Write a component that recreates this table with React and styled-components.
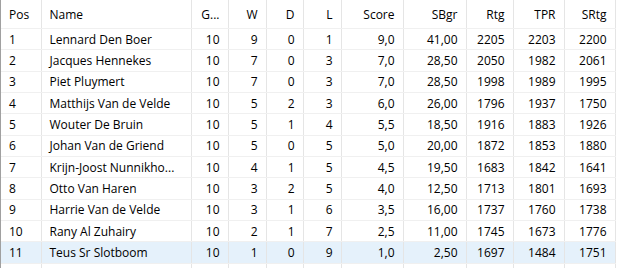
import styled, { createGlobalStyle } from "styled-components";

const GlobalStyle = createGlobalStyle`
  html, body {
    margin: 0;
    padding: 0;
    background: #ffffff;
  }
  body {
    font-family: "Open Sans", "Liberation Sans", sans-serif;
    font-size: 12px;
    color: #000;
  }
`;

const columns = [
  { key: "pos", label: "Pos", width: 40, align: "left" },
  { key: "name", label: "Name", width: 150, align: "left" },
  { key: "g", label: "G...", width: 37 },
  { key: "w", label: "W", width: 38 },
  { key: "d", label: "D", width: 37 },
  { key: "l", label: "L", width: 38 },
  { key: "score", label: "Score", width: 62 },
  { key: "sbgr", label: "SBgr", width: 63 },
  { key: "rtg", label: "Rtg", width: 47 },
  { key: "tpr", label: "TPR", width: 51 },
  { key: "srtg", label: "SRtg", width: 51 },
];

const rows = [
  [1, "Lennard Den Boer", 10, 9, 0, 1, "9,0", "41,00", 2205, 2203, 2200],
  [2, "Jacques Hennekes", 10, 7, 0, 3, "7,0", "28,50", 2050, 1982, 2061],
  [3, "Piet Pluymert", 10, 7, 0, 3, "7,0", "28,50", 1998, 1989, 1995],
  [4, "Matthijs Van de Velde", 10, 5, 2, 3, "6,0", "26,00", 1796, 1937, 1750],
  [5, "Wouter De Bruin", 10, 5, 1, 4, "5,5", "18,50", 1916, 1883, 1926],
  [6, "Johan Van de Griend", 10, 5, 0, 5, "5,0", "20,00", 1872, 1853, 1880],
  [7, "Krijn-Joost Nunnikho...", 10, 4, 1, 5, "4,5", "19,50", 1683, 1842, 1641],
  [8, "Otto Van Haren", 10, 3, 2, 5, "4,0", "12,50", 1713, 1801, 1693],
  [9, "Harrie Van de Velde", 10, 3, 1, 6, "3,5", "16,00", 1737, 1760, 1738],
  [10, "Rany Al Zuhairy", 10, 2, 1, 7, "2,5", "11,00", 1745, 1673, 1776],
  [11, "Teus Sr Slotboom", 10, 1, 0, 9, "1,0", "2,50", 1697, 1484, 1751],
];

const Frame = styled.div`
  width: 618px;
  height: 268px;
  overflow: hidden;
  border-left: 1px solid #a0a0a0;
  box-sizing: border-box;
  background: #fff;
`;

const Grid = styled.table`
  border-collapse: collapse;
  table-layout: fixed;
  width: 613px;
`;

const HeadCell = styled.th`
  height: 28px;
  padding: 0 8px;
  font-weight: normal;
  text-align: ${(p) => (p.$align === "left" ? "left" : "right")};
  border-right: 1px solid #e5e5e5;
  border-bottom: 1px solid #f0f0f0;
  white-space: nowrap;
  overflow: hidden;
  color: #000;
`;

const Row = styled.tr`
  height: 21.35px;
  background: ${(p) => (p.$selected ? "#e5f1fb" : "#fff")};
`;

const Cell = styled.td`
  padding: 0 8px;
  text-align: ${(p) => (p.$align === "left" ? "left" : "right")};
  border-right: 1px solid #e5e5e5;
  border-bottom: 1px solid #f0f0f0;
  white-space: nowrap;
  overflow: hidden;
`;

export default function App() {
  return (
    <>
      <GlobalStyle />
      <Frame>
        <Grid>
          <colgroup>
            {columns.map((c) => (
              <col key={c.key} style={{ width: c.width }} />
            ))}
          </colgroup>
          <thead>
            <tr>
              {columns.map((c) => (
                <HeadCell key={c.key} $align={c.align}>
                  {c.label}
                </HeadCell>
              ))}
            </tr>
          </thead>
          <tbody>
            {rows.map((r, i) => (
              <Row key={i} $selected={i === rows.length - 1}>
                {r.map((v, j) => (
                  <Cell key={j} $align={columns[j].align}>
                    {v}
                  </Cell>
                ))}
              </Row>
            ))}
            <Row>
              {columns.map((c) => (
                <Cell key={c.key} />
              ))}
            </Row>
          </tbody>
        </Grid>
      </Frame>
    </>
  );
}
